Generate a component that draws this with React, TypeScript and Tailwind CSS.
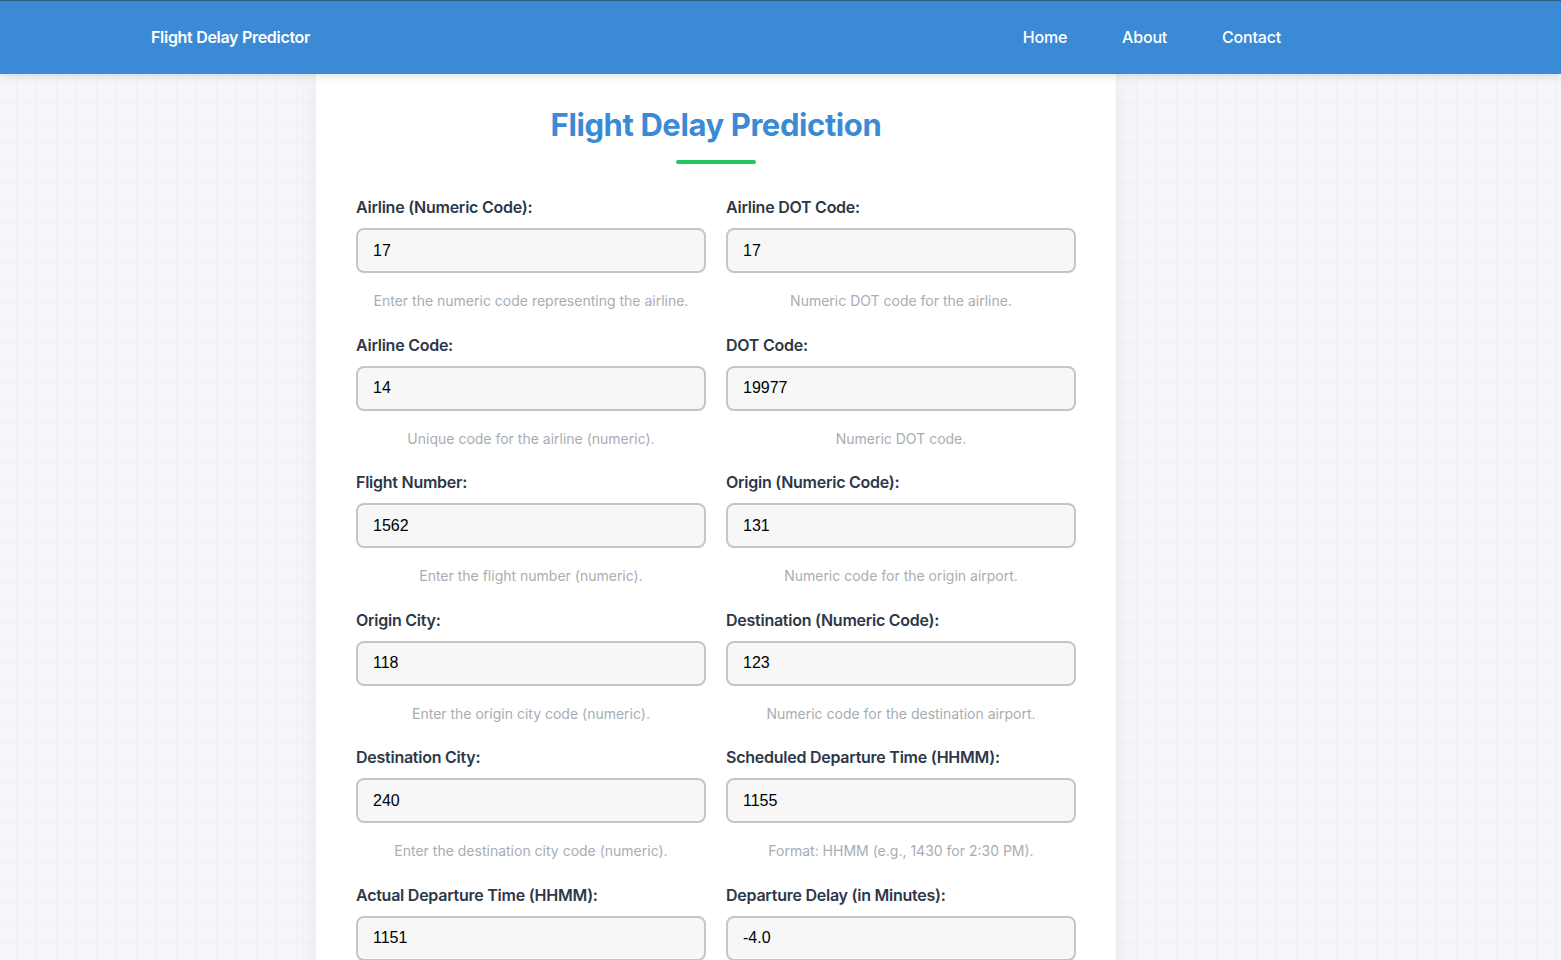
import React from 'react';

type Field = { label: string; value: string; help: string };

const fields: Field[] = [
  { label: 'Airline (Numeric Code):', value: '17', help: 'Enter the numeric code representing the airline.' },
  { label: 'Airline DOT Code:', value: '17', help: 'Numeric DOT code for the airline.' },
  { label: 'Airline Code:', value: '14', help: 'Unique code for the airline (numeric).' },
  { label: 'DOT Code:', value: '19977', help: 'Numeric DOT code.' },
  { label: 'Flight Number:', value: '1562', help: 'Enter the flight number (numeric).' },
  { label: 'Origin (Numeric Code):', value: '131', help: 'Numeric code for the origin airport.' },
  { label: 'Origin City:', value: '118', help: 'Enter the origin city code (numeric).' },
  { label: 'Destination (Numeric Code):', value: '123', help: 'Numeric code for the destination airport.' },
  { label: 'Destination City:', value: '240', help: 'Enter the destination city code (numeric).' },
  { label: 'Scheduled Departure Time (HHMM):', value: '1155', help: 'Format: HHMM (e.g., 1430 for 2:30 PM).' },
  { label: 'Actual Departure Time (HHMM):', value: '1151', help: 'Enter the actual departure time.' },
  { label: 'Departure Delay (in Minutes):', value: '-4.0', help: 'Delay in minutes (negative if early).' },
];

const FormField: React.FC<{ field: Field }> = ({ field }) => (
  <div className="flex flex-col">
    <label className="block h-6 leading-6 mb-[9px] text-[16px] font-semibold tracking-[-0.25px] text-[#2d3748]">{field.label}</label>
    <input
      readOnly
      value={field.value}
      className="h-[45px] w-full rounded-lg border-2 border-[#c2c6ca] bg-[#f7f7f7] pl-[15px] text-[16px] text-black font-['Liberation_Sans',Arial,sans-serif] outline-none"
    />
    <p className="mt-[18px] h-5 leading-5 text-center text-[14px] text-[#a9adb2]">{field.help}</p>
  </div>
);

export default function App() {
  return (
    <div className="h-[960px] overflow-hidden bg-[#f5f6fa] bg-[linear-gradient(to_right,#f0f1f4_1px,transparent_1px),linear-gradient(to_bottom,#f0f1f4_1px,transparent_1px)] bg-[size:20px_20px] bg-[position:16px_3px] font-['Inter','Noto_Sans',sans-serif]">
      <nav className="relative z-10 h-[74px] bg-[#3a8ad5] border-t border-[#2a5b82] shadow-[0_2px_8px_rgba(0,0,0,0.12)] flex items-center justify-between pb-[2px] pl-[151px] pr-[280px]">
        <span className="text-white text-[16px] font-semibold tracking-[-0.3px]">Flight Delay Predictor</span>
        <div className="flex items-center gap-[55px] text-white text-[16px] font-medium tracking-[-0.2px]">
          <a>Home</a>
          <a>About</a>
          <a>Contact</a>
        </div>
      </nav>
      <main className="ml-[316px] w-[800px] min-h-[886px] bg-white px-10 pt-8 pb-10 shadow-[0_0_24px_rgba(0,0,0,0.06)]">
        <h1 className="text-center text-[31px] leading-[38px] font-bold tracking-[-0.4px] text-[#3a8ad6]">Flight Delay Prediction</h1>
        <div className="mx-auto mt-[16px] h-1 w-20 rounded-full bg-[#22c55e]" />
        <div className="mt-[31px] grid grid-cols-2 gap-x-5 gap-y-[21.5px]">
          {fields.map((f) => (
            <FormField key={f.label} field={f} />
          ))}
        </div>
      </main>
    </div>
  );
}
